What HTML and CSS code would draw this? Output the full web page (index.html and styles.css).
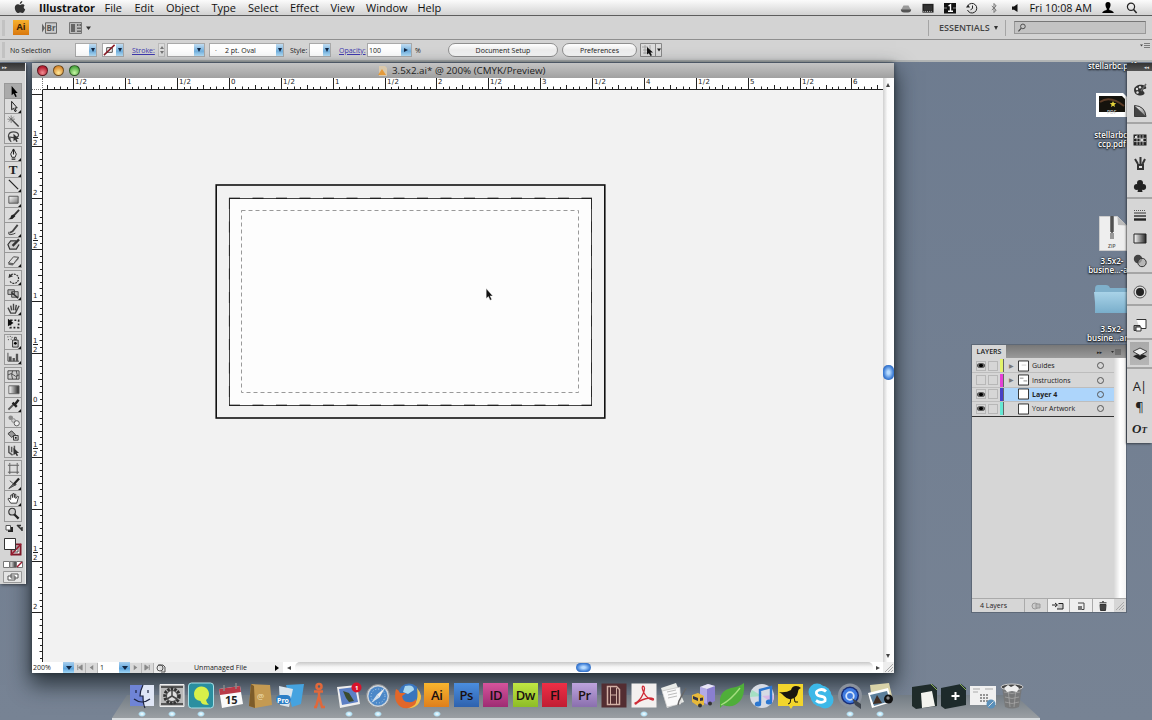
FILE: index.html
```
<!DOCTYPE html>
<html lang="en">
<head>
  <meta charset="UTF-8">
  <title>3.5x2.ai</title>
  <link rel="stylesheet" href="styles.css">
</head>
<body>
  <div class="desktop">

    <!-- Menu bar -->
    <div class="menubar">
      <svg class="apple" viewBox="0 0 12 13"><path d="M8.300 0C8.400 1.600 7.100 2.900 5.800 2.900 5.700 1.400 7 .2 8.300 0ZM10.600 4.400C9.300 5.300 9.400 7.500 11.200 8.400 10.600 10.200 9.500 12 8.400 12 7.600 12 7.300 11.500 6.300 11.500S5 12 4.200 12C2.500 12 .8 8.900.8 6.700.8 4.500 2.200 3.300 3.700 3.300 4.700 3.300 5.400 3.900 6.100 3.900 6.800 3.900 7.600 3.200 8.700 3.200 9.500 3.200 10.200 3.700 10.600 4.400Z"/></svg>
      <div class="menus">
        <b>Illustrator</b><span>File</span><span>Edit</span><span>Object</span><span>Type</span><span>Select</span><span>Effect</span><span>View</span><span>Window</span><span>Help</span>
      </div>
      <div class="status">
        <svg viewBox="0 0 12 12"><path d="M1 8 3.500 3.500h5L11 8Z" fill="#999"/><path d="M.8 7.500h10.400Q11 10.500 8 10.500H4Q1 10.500.8 7.500Z" fill="#555"/></svg>
        <svg viewBox="0 0 13 12"><path d="M.5 1.500h12v9.500H.5Z" fill="#222"/><path d="M2 3h9v5.500H2Z" fill="#333"/><path d="M1.500 9.700h10" stroke="#ddd" stroke-dasharray="1 1"/></svg>
        <svg viewBox="0 0 12 12"><path d="M0 1h12v10.500H0Z" fill="#111"/><path d="M4.500 4 6.500 2.800V9M4 9.300h5" stroke="#fff" stroke-width="1.400" fill="none"/><path d="M0 6h3M9 6h3" stroke="#888"/></svg>
        <svg viewBox="0 0 12 12"><path d="M2 3.500A4.800 4.800 0 1 1 1.500 8M6.500 3.500V6.500L4.500 7.800" stroke="#222" fill="none"/><path d="M0 5.500 4 5.500 2 2.500Z" fill="#222"/></svg>
        <svg viewBox="0 0 12 12"><path d="M3.800 4 8.200 8 6 10.500V1.500L8.200 4 3.800 8" stroke="#777" fill="none"/></svg>
        <svg viewBox="0 0 12 12"><path d="M2 4.500h2L7.500 2v8L4 7.800H2Z" fill="#111"/></svg>
      </div>
      <span class="clock">Fri 10:08 AM</span>
      <svg class="user" viewBox="0 0 12 12"><path d="M6 0C8 0 8.800 1.500 8.500 3.500 8.300 5 7.500 6 7.300 6.500V8Q11.500 8.800 11.800 11H.2Q.5 8.800 4.700 8V6.500C4.500 6 3.700 5 3.500 3.500 3.200 1.500 4 0 6 0Z"/></svg>
      <svg class="find" viewBox="0 0 12 12"><circle cx="5" cy="4.800" r="3.600" stroke="#222" stroke-width="1.200" fill="none"/><path d="M7.600 7.500 10.600 11" stroke="#222" stroke-width="1.500"/></svg>
    </div>

    <!-- Application bar -->
    <div class="appbar">
      <span class="grip"></span>
      <span class="ai-logo">Ai</span>
      <svg class="bridge" viewBox="0 0 15 12"><path d="M0 1.500 3 6 0 10.500Z" fill="#666"/><path d="M3.500.8h11v10.500h-11Z" fill="#ccc" stroke="#666"/><text x="4.500" y="9.200">Br</text></svg>
      <svg class="arrange" viewBox="0 0 22 12"><path d="M.5.500h12v11H.5Z" fill="#bbb" stroke="#777"/><path d="M2 2h4v8H2ZM8 2h1.500v2H8ZM10.500 2H12v2h-1.500ZM8 5.500h4V7H8ZM8 8.500h4V10H8Z" fill="#666"/><path d="M17 4.500h5l-2.500 3.500Z" fill="#333"/></svg>
      <div class="workspace">ESSENTIALS<i class="down"></i></div>
      <div class="search"><svg viewBox="0 0 10 10"><circle cx="6" cy="3.800" r="2.600" stroke="#444" fill="none"/><path d="M4 6 1 9.200" stroke="#444" stroke-width="1.300"/></svg></div>
    </div>

    <!-- Control bar -->
    <div class="control">
      <span class="grip"></span>
      <span class="no-sel">No Selection</span>
      <span class="combo fill-box"><i></i></span>
      <span class="combo stroke-box"><svg viewBox="0 0 14 12"><path d="M4 3.500h6v5H4Z" fill="none" stroke="#444"/><path d="M1 11.500 12.500.500" stroke="#8b1a25" stroke-width="1.600"/></svg><i></i></span>
      <a class="stroke-label">Stroke:</a>
      <span class="stepper"><b></b><b></b></span>
      <span class="combo weight"><i></i></span>
      <span class="combo brush"><em>·</em>2 pt. Oval<i></i></span>
      <span class="style-label">Style:</span>
      <span class="combo style-box"><i></i></span>
      <a class="opacity-label">Opacity:</a>
      <span class="combo opacity">100<i class="side"></i></span>
      <span class="percent">%</span>
      <button class="doc">Document Setup</button>
      <button class="prefs">Preferences</button>
      <svg class="select-like" viewBox="0 0 22 14"><path d="M.5.500h21v13H.5ZM15.500 1v12" fill="#ddd" stroke="#888"/><path d="M2 4h6M3 7h6M3 10h4M5 2v9M10 2v5" stroke="#999" stroke-width=".8"/><path d="M7 4v7.500l1.800-1.300L10.500 13l1.500-.7-1.600-2.800H13Z" fill="#111"/><path d="M17 5.500h4L19 8.500Z" fill="#222"/></svg>
      <svg class="flyout" viewBox="0 0 10 8"><path d="M0 2.500h3L1.500 4.500Z" fill="#444"/><path d="M4 1.500h6M4 3.500h6M4 5.500h6" stroke="#666" stroke-width=".8"/></svg>
    </div>

    <!-- Desktop files -->
    <div class="files">
      <div class="file file-top">stellarbc.pdf</div>
      <div class="file file-pdf">
        <svg viewBox="0 0 32 24"><path d="M0 0h27l5 5v19H0Z" fill="#fff"/><path d="M3 3h23l3 3v13H3Z" fill="#15130d"/><path d="M4 9Q14 2 28 13" stroke="#5b3b26" stroke-width="2" fill="none"/><path d="m17 8 .9 2.100 2.300.2-1.800 1.500.6 2.200-2-1.300-2 1.300.6-2.200-1.800-1.500 2.300-.2Z" fill="#e6d43c"/><text x="11" y="21">PDF</text></svg>
        stellarbc-<br>ccp.pdf
      </div>
      <div class="file file-zip">
        <svg viewBox="0 0 28 35"><path d="M.5.500h18l9 9v25H.500Z" fill="#eee" stroke="#ccc"/><path d="M18.500.500 19 9l9 .5Z" fill="#bbb"/><path d="M13 0v16" stroke="#777" stroke-width="4"/><path d="M13 0v22" stroke="#444" stroke-width="1.500"/><path d="M11 17h4v6h-4Z" fill="#999"/><text x="9" y="32">ZIP</text></svg>
        3.5x2-<br>busine...-are
      </div>
      <div class="file file-folder">
        <svg viewBox="0 0 36 28"><path d="M1 4Q1 0 4 0h8q3 0 4 3h20v25H1Z" fill="#7fb0cb"/><path d="M0 7h36v21H2Z" fill="url(#folder)"/></svg>
        3.5x2-<br>busine...area
      </div>
    </div>

    <!-- Document window -->
    <div class="window">
      <div class="titlebar">
        <span class="light red"></span><span class="light yellow"></span><span class="light green"></span>
        <div class="title"><svg viewBox="0 0 10 10"><path d="M1 0h6l2 2v8H1Z" fill="#d9c8ab"/><path d="M0 9 4 3 8 9Z" fill="#e39a3c"/></svg>3.5x2.ai* @ 200% (CMYK/Preview)</div>
      </div>
      <div class="work">
        <div class="corner"></div>
        <svg class="ruler-x" id="rulerX" viewBox="43 78 840 12"></svg>
        <svg class="ruler-y" id="rulerY" viewBox="32 90 11 572"></svg>
        <svg class="canvas" viewBox="43 90 840 572">
          <rect x="216.200" y="185" width="388.600" height="233" fill="none" stroke="#111" stroke-width="1.600"/>
          <rect x="229.500" y="198.500" width="362" height="207" fill="#fdfdfd" stroke="#444"/>
          <path d="M229 198.200H592M229 405.200H592" stroke="#111" stroke-dasharray="11 12.500"/>
          <path d="M229.400 198V405M591.500 198V405" stroke="#222" stroke-dasharray="11 12.500" stroke-width=".8"/>
          <rect x="241.500" y="210.500" width="337" height="182" fill="none" stroke="#999" stroke-dasharray="4 3"/>
          <path d="M486.200 288.500v10l2.200-1.900 1.700 3.600 1.700-.8-1.700-3.500h2.700Z" fill="#111" stroke="#fff" stroke-width=".4"/>
        </svg>
        <div class="scroll-y"><span class="thumb"></span><span class="arrow up"></span><span class="arrow dn"></span></div>
      </div>
      <div class="statusbar">
        <span class="zoom-value">200%</span><span class="drop"></span>
        <span class="nav"><svg viewBox="0 0 8 8"><path d="M2 1v6M7 1 3 4l4 3Z" stroke="#888" fill="#888"/></svg></span>
        <span class="nav"><svg viewBox="0 0 8 8"><path d="M6 1 2 4l4 3Z" fill="#888"/></svg></span>
        <span class="page">1</span><span class="drop"></span>
        <span class="nav"><svg viewBox="0 0 8 8"><path d="M2 1 6 4 2 7Z" fill="#888"/></svg></span>
        <span class="nav"><svg viewBox="0 0 8 8"><path d="M6 1v6M1 1l4 3-4 3Z" stroke="#888" fill="#888"/></svg></span>
        <svg class="preview" viewBox="0 0 10 10"><path d="M2 2h5l2 2v5H5" fill="#ddd" stroke="#555"/><circle cx="4" cy="5" r="3" fill="none" stroke="#555"/></svg>
        <span class="managed">Unmanaged File</span>
        <i class="right"></i>
        <div class="scroll-x"><span class="arrow lf"></span><div class="track"><span class="thumb"></span></div><span class="arrow rt"></span></div>
        <svg class="resize" viewBox="0 0 11 11"><path d="M2 10 10 2M5 10l5-5M8 10l2-2" stroke="#aaa"/></svg>
      </div>
    </div>

    <!-- Tools -->
    <div class="tools">
      <div class="tools-head">▸▸</div>
      <div class="tool-list">
        <div class="group">
          <div class="tool on"><svg viewBox="0 0 16 14"><path d="M6 1v10l2.200-1.800L10 13l1.500-.7-1.700-3.600H12.500Z"/></svg></div>
          <div class="tool more"><svg viewBox="0 0 16 14"><path d="M6 1.500v9l2-1.500 1.700 3.500 1.300-.6L9.500 8.500H12Z" fill="#ddd" stroke="#111"/></svg></div>
          <div class="tool"><svg viewBox="0 0 16 14"><path d="m6.500 5.500 7 7" stroke="#444" stroke-width="1.500"/><path d="M5.500.5v8M1.500 4.500h8M2.700 1.700l5.600 5.600M8.300 1.700 2.700 7.300" stroke="#555" stroke-width=".7"/></svg></div>
          <div class="tool"><svg viewBox="0 0 16 14"><path d="M5 10C1 8 2 2 8 2S15 7 11 8 3 6 3 9s3 2 2 4" fill="none" stroke="#444" stroke-width="1.300"/><path d="M8 4v8l1.800-1.500L11 13l1.500-.6-1.200-2.600H14Z" fill="#333"/></svg></div>
        </div>
        <div class="group">
          <div class="tool more"><svg viewBox="0 0 16 14"><path d="M8 1 11 6.500 9.700 10H6.300L5 6.500Z" fill="#eee" stroke="#222"/><path d="M8 1v6M6 12h4" stroke="#222" stroke-width="1.300"/></svg></div>
          <div class="tool more"><span class="t">T</span></div>
          <div class="tool more"><svg viewBox="0 0 16 14"><path d="m3 2 10 10" stroke="#222" stroke-width="1.300"/></svg></div>
          <div class="tool more"><svg viewBox="0 0 16 14"><path d="M3 3.500h10v7.500H3Z" fill="url(#shade)" stroke="#555"/></svg></div>
          <div class="tool"><svg viewBox="0 0 16 14"><path d="M14 2 8 8.500" stroke="#333" stroke-width="2"/><path d="M8.500 7Q5 7 5 10 4 11.500 2 12q5 1 8-3.200Z" fill="#222"/></svg></div>
          <div class="tool more"><svg viewBox="0 0 16 14"><path d="M12.500 2 7 9 4 10.500" stroke="#444" stroke-width="2" fill="none"/><path d="M3 9.500Q2 13 5 12.500T10 11" stroke="#333" fill="none"/></svg></div>
          <div class="tool"><svg viewBox="0 0 16 14"><path d="M11 3H5L2 7l2 5h7l3-5" stroke="#333" fill="#ccc" stroke-width="1.300"/><path d="m14 1.500-7 7" stroke="#333" stroke-width="2.500"/></svg></div>
          <div class="tool more"><svg viewBox="0 0 16 14"><path d="M2.500 9.500 8 3l5.500.5L8 10.500Z" fill="#ddd" stroke="#444"/><path d="M2.500 9.500v2L7 12.500l6.500-7v-2L8 10.500Z" fill="#666"/></svg></div>
        </div>
        <div class="group">
          <div class="tool more"><svg viewBox="0 0 16 14"><path d="M5.500 3.200A5 5 0 1 1 4 9.500" fill="none" stroke="#333" stroke-width="1.300" stroke-dasharray="2 1"/><path d="M2.500 6.500 3.500 2l4 2.500Z" fill="#333"/></svg></div>
          <div class="tool more"><svg viewBox="0 0 16 14"><path d="M2 3h7v5H2ZM6 5h7v6H6Z" fill="#bbb" stroke="#444"/><path d="m6 6 7 6" stroke="#333" stroke-width="1.500"/></svg></div>
          <div class="tool more"><svg viewBox="0 0 16 14"><path d="M2 6l3 6h5l4-8M5 4l1 5M8 2v7M11 3l-1 6" fill="none" stroke="#444" stroke-width="1.500"/></svg></div>
          <div class="tool"><svg viewBox="0 0 16 14"><path d="M5 3.500h8.500v8H4.500Z" fill="none" stroke="#222" stroke-width="1.800" stroke-dasharray="2 2"/><path d="M2 2v8l6-3.500Z" fill="#111"/></svg></div>
        </div>
        <div class="group">
          <div class="tool more"><svg viewBox="0 0 16 14"><path d="M7 5.500h6V13H7ZM9 2.500h2V5H9Z" fill="#ccc" stroke="#333"/><path d="M1.500 2h1M4 1.500h1M6 2.500h1M2 5h1M5 4.500h1" stroke="#333"/><circle cx="10" cy="9" r="1.500"/></svg></div>
          <div class="tool more"><svg viewBox="0 0 16 14"><path d="M2 3v9h12" stroke="#444" fill="none"/><path d="M3 7h3v5H3ZM7 8.500h2.500V12H7ZM10.500 4H13v8h-2.500Z" fill="#555"/></svg></div>
        </div>
        <div class="group">
          <div class="tool"><svg viewBox="0 0 16 14"><path d="M2 3h12v9H2ZM2 7.500q4-3 6 0t6 0M7 3q-2 4 0 9M11 3q2 4 0 9" fill="#ccc" stroke="#444"/></svg></div>
          <div class="tool"><svg viewBox="0 0 16 14"><path d="M3 3h11v8.500H3Z" fill="url(#bw)" stroke="#666"/></svg></div>
          <div class="tool more"><svg viewBox="0 0 16 14"><path d="M2.500 12.500 8 7" stroke="#555" stroke-width="2"/><path d="m7 5 4.500 4.500M9.500 7 13.500 2" stroke="#222" stroke-width="2.600"/></svg></div>
          <div class="tool"><svg viewBox="0 0 16 14"><circle cx="5" cy="4" r="2.500" fill="#888"/><circle cx="8" cy="7" r="2" fill="#ccc" stroke="#888"/><circle cx="11.500" cy="10" r="2.800" fill="#eee" stroke="#555"/></svg></div>
          <div class="tool"><svg viewBox="0 0 16 14"><path d="M2 5 6 2l4 4-4 3Z" fill="#999" stroke="#333"/><path d="M8 7h5v5H8Z" fill="#ccc" stroke="#333"/><circle cx="10.500" cy="9.500" r="1" /></svg></div>
          <div class="tool"><svg viewBox="0 0 16 14"><path d="M3 2v7l4 3M6 3v6M9 2v5" stroke="#555" stroke-width="1.600" fill="none"/><path d="M8 4v8l2-1.500 1.500 2.500 1.500-.7-1.500-2.500H14Z" fill="#333"/></svg></div>
        </div>
        <div class="group">
          <div class="tool"><svg viewBox="0 0 16 14"><path d="M4 3.500h8v7.500H4ZM4 1v2M12 1v2M4 11v2M12 11v2M2 3.500h2M12 3.500h2M2 11h2M12 11h2" fill="none" stroke="#555"/></svg></div>
          <div class="tool more"><svg viewBox="0 0 16 14"><path d="M3 12.500 8 7l3 1Z" fill="#777" stroke="#444"/><path d="M8 8 14 1.500" stroke="#222" stroke-width="2.400"/><path d="m4 4 6 5" stroke="#444"/></svg></div>
          <div class="tool more"><svg viewBox="0 0 16 14"><path d="M5 12 2 7.500l1-1L5 8V3.500l1.500-.5L7 6V2l1.500-.5L9 6V2.500l1.500 0V7L12.500 4.500 13.500 5 11.500 12Z" fill="#fff" stroke="#333"/></svg></div>
          <div class="tool"><svg viewBox="0 0 16 14"><circle cx="6.500" cy="5" r="3.600" fill="#ccc" stroke="#333" stroke-width="1.200"/><path d="m9 8 4.500 4.500" stroke="#222" stroke-width="2.400"/></svg></div>
        </div>
      </div>
      <svg class="paint" viewBox="0 0 22 62">
        <path d="M5 3h5v5H5Z" fill="#222"/><path d="M3 1.500h4.500V6H3Z" fill="#fff" stroke="#555"/>
        <path d="m14 1 5 5M15 1.500h3M19 3v4" stroke="#333" stroke-width="1.500"/>
        <path d="M8.500 20.500h9v10h-9Z" fill="#fff" stroke="#7d1a2a" stroke-width="2"/><path d="M11 23h4v5h-4Z" fill="none" stroke="#444"/><path d="m8 31 10-11" stroke="#9c1b30" stroke-width="1.500"/>
        <path d="M1.500 14.500h11v11h-11Z" fill="#fff" stroke="#333"/>
        <path d="M.5 37.500h6v6h-6Z" fill="#fff" stroke="#777"/><path d="M7 37.500h6v6H7Z" fill="url(#bw)" stroke="#777"/><path d="M13.500 37.500h6v6h-6Z" fill="#fff" stroke="#777"/><path d="m14 43 5-5" stroke="#9c1b30" stroke-width="1.500"/>
        <path d="M.5 47.500h18v11h-18Z" fill="#e4e4e4" stroke="#999"/><path d="M5 52h7v4H5ZM8 50h7v4H8Z" fill="#fff" stroke="#555"/>
      </svg>
    </div>

    <!-- Layers -->
    <div class="layers">
      <div class="layers-head">
        <span class="tab">LAYERS</span><span class="ff">▸▸</span>
        <svg viewBox="0 0 10 8"><path d="M0 3h3L1.500 5Z" fill="#333"/><path d="M4 2h6M4 4h6M4 6h6" stroke="#444" stroke-width=".8"/></svg>
      </div>
      <div class="layers-body">
        <div class="rows">
          <div class="row"><span class="box eye"></span><span class="box"></span><span class="color c-yellow"></span><span class="tri">▶</span><svg class="mini" viewBox="0 0 12 12"><path d="M.5.500h11v11H.500Z" fill="#fff" stroke="#222"/><path d="M4 5h5" stroke="#ccc"/></svg><span class="name">Guides</span><span class="target"></span></div>
          <div class="row"><span class="box"></span><span class="box"></span><span class="color c-pink"></span><span class="tri">▶</span><svg class="mini" viewBox="0 0 12 12"><path d="M.5.500h11v11H.500Z" fill="#fff" stroke="#222"/><path d="M2 4h4M6 7h4" stroke="#888"/></svg><span class="name">Instructions</span><span class="target"></span></div>
          <div class="row active"><span class="box eye"></span><span class="box"></span><span class="color c-blue"></span><span class="tri"></span><svg class="mini" viewBox="0 0 12 12"><path d="M.5.500h11v11H.500Z" fill="#fff" stroke="#222"/></svg><span class="name">Layer 4</span><span class="target"></span></div>
          <div class="row"><span class="box eye"></span><span class="box"></span><span class="color c-cyan"></span><span class="tri"></span><svg class="mini" viewBox="0 0 12 12"><path d="M.5.500h11v11H.500Z" fill="#fff" stroke="#222"/></svg><span class="name">Your Artwork</span><span class="target"></span></div>
        </div>
        <div class="layers-scroll"></div>
      </div>
      <div class="layers-foot">
        <span class="count">4 Layers</span>
        <span class="fbtn dim"><svg viewBox="0 0 12 10"><circle cx="5" cy="5" r="3" fill="#ccc" stroke="#999"/><path d="M6 3h4v4H6Z" fill="#bbb" stroke="#999"/></svg></span>
        <span class="fbtn"><svg viewBox="0 0 12 10"><path d="M0 4h5M3 2l2.500 2L3 6" stroke="#222" fill="none"/><path d="M6.500 2.500h4.500v5.500H5" stroke="#222" fill="#ccc"/></svg></span>
        <span class="fbtn"><svg viewBox="0 0 12 10"><path d="M3 2h6v6.500H6" stroke="#444" fill="#eee"/><path d="M3 5h4v4H3Z" fill="#777"/></svg></span>
        <span class="fbtn"><svg viewBox="0 0 12 10"><path d="M3 3.500h6L8.500 9.500h-5ZM2.500 1.800h7M5 .8h2" fill="#444" stroke="#333"/></svg></span>
        <svg class="resize" viewBox="0 0 11 11"><path d="M2 10 10 2M5 10l5-5M8 10l2-2" stroke="#aaa"/></svg>
      </div>
    </div>

    <!-- Collapsed panels -->
    <div class="panels">
      <div class="panels-head">◂◂</div>
      <div class="pgroup two">
        <svg viewBox="0 0 16 16"><path d="M2 8C2 4 7 2 11 3s4 4 2 4-3 1-1 3-2 4-5 3.500S2 11 2 8Z" fill="#333"/><circle cx="5" cy="7" r="1.200" fill="#ddd"/><circle cx="8" cy="5.200" r="1.200" fill="#ddd"/><circle cx="5.500" cy="10.500" r="1.200" fill="#ddd"/><path d="m9 9 5-7" stroke="#666" stroke-width="1.500"/></svg>
        <svg viewBox="0 0 16 16"><path d="M2.500 2.500Q13 3 14 13.500H2.500Z" fill="url(#shade)" stroke="#333"/><path d="M2.500 13.500V2.500L14 13.500Z" fill="#444"/></svg>
      </div>
      <div class="pgroup three">
        <svg viewBox="0 0 16 16"><path d="M1.500 2.500h13v11h-13Z" fill="#222"/><path d="M2 6.300h12M2 9.600h12M5 3v10M8 3v10M11 3v10" stroke="#ccc" stroke-width=".8"/><path d="M3 4h2v2H3ZM8.500 7H11v2H8.500Z" fill="#ddd"/></svg>
        <svg viewBox="0 0 16 16"><path d="M5 9h7v6H5Z" fill="#333"/><path d="M7 11h3v2H7Z" fill="#ddd"/><path d="M6 9 3 4M8.500 9V2M10.500 9 13 4" stroke="#333" stroke-width="2"/></svg>
        <svg viewBox="0 0 16 16"><circle cx="8" cy="5" r="3" fill="#222"/><circle cx="4.800" cy="9" r="2.900" fill="#222"/><circle cx="11.200" cy="9" r="2.900" fill="#222"/><path d="M7 7h2l1.500 7h-5Z" fill="#222"/></svg>
      </div>
      <div class="pgroup three">
        <svg viewBox="0 0 16 16"><path d="M2 3.500h12" stroke="#555" stroke-dasharray="1 1"/><path d="M2 6h12" stroke="#333"/><path d="M2 9h12" stroke="#333" stroke-width="1.500"/><path d="M2 12.500h12" stroke="#222" stroke-width="2.400"/></svg>
        <svg viewBox="0 0 16 16"><path d="M2 4h12v9H2Z" fill="url(#bw)" stroke="#222"/></svg>
        <svg viewBox="0 0 16 16"><circle cx="6" cy="6" r="4.200" fill="#444"/><circle cx="10" cy="9.500" r="4.200" fill="#aaa" fill-opacity=".7" stroke="#333"/></svg>
      </div>
      <div class="pgroup one">
        <svg viewBox="0 0 16 16"><circle cx="8" cy="8" r="6" fill="#ddd" stroke="#555"/><circle cx="8" cy="8" r="4" fill="#222"/></svg>
      </div>
      <div class="pgroup one last-one">
        <svg viewBox="0 0 16 16"><path d="M4.500 2.500H14v9H8" fill="#fff" stroke="#333"/><path d="M2 8.500h6v5H2Z" fill="#888" stroke="#333"/><path d="M4 10h5v4H4Z" fill="#fff" stroke="#333"/></svg>
      </div>
      <div class="pgroup one pressed">
        <svg viewBox="0 0 16 16"><path d="m8 7 7 3.200L8 14l-7-3.800Z" fill="#222"/><path d="M8 2 15 5.500 8 9.500 1 5.500Z" fill="#eee" stroke="#444"/></svg>
      </div>
      <div class="pgroup type-group"><span class="char">A|</span><span>¶</span><span class="ot">O<small>T</small></span></div>
    </div>

    <!-- Dock -->
    <div class="dock">
      <svg class="shelf" viewBox="0 0 930 25" preserveAspectRatio="none"><path d="M15 0H903L928 23H0Z" fill="url(#shelf)"/><path d="M0 23h928v2H0Z" fill="#d9dde0"/></svg>
      <div class="apps">
        <svg viewBox="0 0 26 26"><path d="M1 2h24v21H1Z" fill="#dfe6f6"/><path d="M1 2h13q-3 6-3 11h3l.5 10H1Z" fill="#6f84d6"/><path d="M7 7v3M19 7v3M5 16q8 6 16 0M14 2q-3 6-3 11h3q0 8 2 12" stroke="#1d2440" fill="none" stroke-width="1.200"/></svg>
        <svg viewBox="0 0 26 26"><path d="M1 1.500h24v22H1Z" fill="#b9b9b9" stroke="#eee"/><path d="M2 4h22M2 21h22" stroke="#555" stroke-width="2"/><circle cx="13" cy="13" r="7" fill="none" stroke="#333" stroke-width="3.500" stroke-dasharray="2.500 1"/><circle cx="13" cy="13" r="5.500" fill="#ddd" stroke="#444"/><path d="M13 13V7.500M13 13l5 3M13 13l-5 3" stroke="#444" stroke-width="1.500"/></svg>
        <svg viewBox="0 0 26 26"><rect x=".5" y="0" width="25" height="25" rx="3" fill="#2a8fa0" stroke="#a8dfe6"/><path d="M6 11a7.500 7.500 0 1 1 12 6 7 7 0 0 0 3 4.500Q14 23 12.500 18 6 17 6 11Z" fill="#d8f04a"/></svg>
        <svg viewBox="0 0 26 26"><path d="m1 6 21-3 3 18-21 4Z" fill="#fafafa"/><path d="m1 6 21-3 1 6-21 3Z" fill="#b93a48"/><path d="M6 2v6M18 0v6" stroke="#888" stroke-width="1.500"/><text x="7" y="21" class="cal">15</text></svg>
        <svg viewBox="0 0 26 26"><path d="m4 1 19 1 2 20-17 3-6-2Z" fill="#c49a52"/><path d="m4 1 3 2 1 22-6-2Z" fill="#7d5c2a"/><text x="10" y="16" class="at">@</text></svg>
        <svg viewBox="0 0 26 26"><path d="m9 2 18-1-3 20-9 3Z" fill="#45a3e0"/><path d="m2 3 14 3-4 18L3 22Z" fill="#d9e4ec"/><rect x="-1" y="12" width="15" height="9" rx="4.500" fill="#2b7fc7"/><text x="0" y="19.500" class="pro">Pro</text></svg>
        <svg viewBox="0 0 26 26"><g fill="none" stroke="#e0683b" stroke-width="2.500"><circle cx="13" cy="3.500" r="2.500"/><path d="M8 8.500h9M13 8v6M13 13l-3 11M13 13l3 11M8 24h3M15 24h4" /></g></svg>
        <svg viewBox="0 0 26 26"><path d="m1 4 20-2 3 19-20 4Z" fill="#eee"/><path d="m3 6 16-2 3 15-16 3Z" fill="#5c7fc4"/><path d="m7 8 6 2 5 8-5 1-3-4Z" fill="#3a4a2e"/><circle cx="20.500" cy="4.500" r="5" fill="#d8142c"/><text x="19" y="7" class="badge">1</text></svg>
        <svg viewBox="0 0 26 26"><circle cx="13" cy="13" r="11.500" fill="#ccd3da" stroke="#888"/><circle cx="13" cy="13" r="9.500" fill="#4c88c8"/><path d="M20 5 14.500 14.500 12 11.500Z" fill="#eee"/><path d="m6 20 6-8.500 2.500 3Z" fill="#d2e0ee"/><circle cx="13" cy="13" r="7" stroke="#b8d2ea" stroke-dasharray="1 2" fill="none"/></svg>
        <svg viewBox="0 0 26 26"><circle cx="14" cy="11" r="10.500" fill="#3975bd"/><path d="M10 3q9-2 9 4l-6 4-5-2Z" fill="#a9d7ee"/><path d="M22 5q7 8 2 15-4 6-12 5 9-3 10-9 1-4 0-11Z" fill="#f2c14a"/><path d="M1 6q3 1 4 4l6 0q-2 2-4 3 1 6 6 6 5 1 8-3 1 5-3 7-6 4-12 1Q0 20 0 13 0 9 1 6Z" fill="#e1672a"/></svg>
        <span class="adobe ai">Ai</span>
        <span class="adobe ps">Ps</span>
        <span class="adobe id">ID</span>
        <span class="adobe dw">Dw</span>
        <span class="adobe fl">Fl</span>
        <span class="adobe pr">Pr</span>
        <svg viewBox="0 0 26 26"><path d="M.5.500h25v24H.500Z" fill="#532d31"/><path d="M6.500 3.500h9l3 3v15h-12Z" fill="none" stroke="#d2b0a5" stroke-width="1.500"/><path d="M9 12h7M9.500 4v17M15.500 5v16" stroke="#d2b0a5"/></svg>
        <svg viewBox="0 0 26 26"><path d="M.5.500h25v24H.500Z" fill="#f3f0ef"/><path d="M4 20q5-2 8-9t0-8q-2 1 1 7t9 7q2-2-4-2-7 1-12 5-2 2-2 0Z" fill="none" stroke="#cf2a35" stroke-width="1.300"/></svg>
        <svg viewBox="0 0 26 26"><path d="m1 5 15-5 8 19-17 6Z" fill="#e9ebe8"/><path d="m2 8 18-4 1 17-14 3Z" fill="#fafafa" stroke="#aaa" stroke-width=".5"/><path d="m7 9 9-2M8 12l9-2M8 15l9-2" stroke="#bbb"/><path d="m26 5-7 13-1 4" stroke="#666" stroke-width="1.500" fill="none"/></svg>
        <svg viewBox="0 0 26 26"><path d="m10 4 8-3 7 2v15l-8 4-7-4Z" fill="#8a7fd0"/><path d="m10 4 7 2v15l-7-3Z" fill="#b3abe6"/><path d="m10 4 8-3 7 2-8 3Z" fill="#e8e6f5"/><path d="m2 12 6-2 6 3v9l-6 1-6-4Z" fill="#e7b93a"/><path d="m3 13 5 2v3l-5-2ZM10 15l3-.5v3L10 18Z" fill="#334"/><circle cx="10" cy="22.500" r="2" fill="#333"/><circle cx="20" cy="20.500" r="2" fill="#333"/></svg>
        <svg viewBox="0 0 26 26"><path d="M1 20Q0 8 12 5 20 4 25 0q1 12-4 18-7 8-17 4L1 25Z" fill="#4fae3a"/><path d="M2 22Q12 17 21 5" stroke="#a5de80" fill="none" stroke-width="1.300"/></svg>
        <svg viewBox="0 0 26 26"><circle cx="13" cy="13" r="12" fill="#d6dbe4"/><path d="M13 13 3 7a12 12 0 0 0-2 7Z" fill="#a5e0c3"/><path d="m13 13 10 7a12 12 0 0 0 2-8Z" fill="#d9b9e6"/><path d="M11 20V7l11-3v14" fill="none" stroke="#2c77d0" stroke-width="2.400"/><ellipse cx="9" cy="21" rx="3.200" ry="2.500" fill="#2c77d0"/><ellipse cx="20" cy="19" rx="3.200" ry="2.500" fill="#2c77d0"/></svg>
        <svg viewBox="0 0 26 26"><path d="M0 1h25v22H15l-2 3-2-3H0Z" fill="#f2d52c"/><path d="M1 9q7 1 12-2 1-4 5-4 3 0 5 2-3 1-3 4-1 6-7 7-3 1-7-3l-2-2Z" fill="#18150f"/><path d="m13 15-1 5-2 1M16 14l1 5h3" stroke="#18150f" fill="none"/></svg>
        <svg viewBox="0 0 26 26"><circle cx="9" cy="9" r="8.500" fill="#3db8e8"/><circle cx="17" cy="17" r="8.500" fill="#3db8e8"/><circle cx="13" cy="13" r="10.500" fill="#3db8e8"/><path d="M18 8.500Q15 5.500 11 7T9 11.500q1 1.500 5 2t3 4.500q-4 3-9-.5" stroke="#fff" stroke-width="2.800" fill="none"/></svg>
        <svg viewBox="0 0 26 26"><circle cx="13" cy="12.500" r="12" fill="#8b929c"/><circle cx="13" cy="12.500" r="9" fill="#182e78"/><circle cx="13" cy="12.500" r="7.500" fill="#3f7be0"/><circle cx="13" cy="13" r="3.800" fill="none" stroke="#d5e5fb" stroke-width="1.800"/><path d="m15 15 9 6v5l-6-4Z" fill="#3f454e"/></svg>
        <svg viewBox="0 0 26 26"><path d="M3 2 22 0l3 13-20 5Z" fill="#d8d2a8"/><path d="m1 10 20-5 4 14-20 6Z" fill="#fff"/><path d="m3 12 17-4 3 10-16 5Z" fill="#5c7f9b"/><path d="m6 21 4-9 5 8Z" fill="#412d23"/><circle cx="21.500" cy="16" r="4.500" fill="#111"/><circle cx="21" cy="15" r="1.700" fill="#888"/></svg>
        <span class="gap"></span>
        <svg viewBox="0 0 26 26"><path d="m1 4 20-3 5 4v18L5 26 1 23Z" fill="#1f2b2a"/><path d="m20 1 6 6" stroke="#8ab05a"/><path d="m10 10 11-2 3 15-13 2Z" fill="#f3f3ee"/></svg>
        <svg viewBox="0 0 26 26"><path d="m1 5 20-4 5 4v17L5 26 1 23Z" fill="#1d2a2b"/><path d="m20 1 6 6" stroke="#8ab05a"/><path d="M15.500 9v8M11.500 13h8" stroke="#fff" stroke-width="2"/></svg>
        <svg viewBox="0 0 26 26"><path d="M0 3h26v19H0Z" fill="#f0f0f0"/><path d="M3 6h7M15 6h8M3 9h5" stroke="#aaa"/><path d="M10 12h9M10 15h9M10 18h9" stroke="#777" stroke-dasharray="2 1" stroke-width="1.500"/><circle cx="21" cy="21" r="4.500" fill="#5a90ba"/><path d="m18.500 23.500 5-5" stroke="#ddd"/></svg>
        <svg viewBox="0 0 26 26"><path d="m3 4 3 20q7 3 14 0l3-20Z" fill="#777" fill-opacity=".9"/><path d="M5 9q8 3 16 0M6 14q7 3 14 0M6 19q7 3 14 0M9 6l2 18M17 6l-2 18" stroke="#aaa" fill="none" stroke-width=".7"/><ellipse cx="13" cy="4" rx="11" ry="3" fill="#444" stroke="#ccc"/><path d="m5 5 4-3 3 2 4-2 4 3-2 4-5-1-5 1Z" fill="#eee"/></svg>
      </div>
      <div class="lamps" id="lamps"></div>
    </div>
  </div>

  <!-- Shared gradients -->
  <svg class="defs" width="0" height="0">
    <defs>
      <linearGradient id="shade" x2="1" y2="1"><stop stop-color="#fff"/><stop offset="1" stop-color="#777"/></linearGradient>
      <linearGradient id="bw"><stop stop-color="#fff"/><stop offset="1" stop-color="#222"/></linearGradient>
      <linearGradient id="folder" x2="0" y2="1"><stop stop-color="#a9d3e8"/><stop offset="1" stop-color="#79aecb"/></linearGradient>
      <linearGradient id="shelf" x2="0" y2="1"><stop stop-color="#737c84"/><stop offset="1" stop-color="#9a9fa3"/></linearGradient>
    </defs>
  </svg>
  <script src="script.js"></script>
</body>
</html>
```

FILE: styles.css
```
body {
  margin: 0;
  overflow: hidden;
  font-family: 'Open Sans', 'Noto Sans', sans-serif;
  color: #222;
}

svg {
  display: block;
  flex: none;
}

.desktop {
  position: relative;
  width: 1152px;
  height: 720px;
  overflow: hidden;
  background: linear-gradient(#6d7b8f, #778394);
}

.defs {
  position: absolute;
}

/* Menu bar */
.menubar {
  display: flex;
  align-items: center;
  height: 15px;
  background: linear-gradient(#fbfbfb, #d2d2d2);
  border-bottom: 1px solid #5d5d5d;
  font-size: 11px;
  line-height: 15px;
  color: #111;
}

.apple {
  width: 12px;
  height: 13px;
  margin-left: 14px;
  fill: #333;
}

.menus {
  display: grid;
  grid-template-columns: 65.5px 30px 31.5px 45.5px 36.5px 42px 40.5px 35.5px 51.5px 41px;
  margin-left: 13px;
  white-space: nowrap;
}

.status {
  display: flex;
  gap: 10px;
  margin-left: 441px;
}

.status svg {
  width: 12px;
  height: 12px;
}

.clock {
  width: 67px;
  margin-left: 8px;
  font-size: 10.8px;
  white-space: nowrap;
}

.user {
  width: 12px;
  height: 12px;
  margin-left: 5px;
}

.find {
  width: 12px;
  height: 12px;
  margin-left: 12px;
}

/* Application bar */
.appbar {
  display: flex;
  align-items: center;
  height: 23px;
  background: #d3d3d3;
  border-bottom: 1px solid #8f8f8f;
}

.grip {
  width: 3px;
  height: 16px;
  margin-left: 2px;
  background: #c2c2c2;
}

.ai-logo {
  width: 16px;
  height: 15px;
  margin-left: 8px;
  background: linear-gradient(#f7b02d, #d9780f);
  font-size: 9px;
  font-weight: bold;
  line-height: 14px;
  text-align: center;
  color: #3b2106;
}

.bridge {
  width: 15px;
  height: 12px;
  margin-left: 13px;
}

.bridge text {
  font-size: 8px;
  font-weight: bold;
  fill: #555;
}

.arrange {
  width: 22px;
  height: 12px;
  margin-left: 12px;
}

.workspace {
  display: flex;
  align-items: center;
  width: 78px;
  height: 16px;
  margin-left: 837px;
  padding-left: 10px;
  box-sizing: border-box;
  border-left: 1px solid #a5a5a5;
  border-right: 1px solid #a5a5a5;
  font-size: 9px;
  font-weight: 600;
  color: #444;
}

.down {
  margin-left: 4px;
  border: 2.5px solid transparent;
  border-top: 4px solid #333;
  border-bottom: 0;
}

.search {
  width: 126px;
  height: 10px;
  margin-left: 8px;
  padding: 1px 2px 0;
  background: #c3c3c3;
  border: 1px solid #999;
  border-top-color: #777;
}

.search svg {
  width: 10px;
  height: 9px;
}

/* Control bar */
.control {
  display: flex;
  align-items: center;
  height: 20px;
  background: #d4d4d4;
  border-bottom: 2px solid #b2b5b5;
  font-size: 7px;
  white-space: nowrap;
}

.control a {
  color: #4039b0;
  text-decoration: underline;
}

.no-sel {
  width: 58px;
  margin-left: 5px;
}

.combo {
  display: flex;
  align-items: center;
  height: 12px;
  background: #fff;
  border: 1px solid #aaa;
}

.combo i {
  display: flex;
  align-items: center;
  justify-content: center;
  width: 7px;
  height: 12px;
  margin-left: auto;
  background: linear-gradient(#c2ddf2, #72b1e0 60%, #b6e2fb);
}

.combo i::after {
  content: "";
  border: 2px solid transparent;
  border-top: 4px solid #122744;
  border-bottom: 0;
}

.combo i.side::after {
  border: 2px solid transparent;
  border-left: 4px solid #122744;
  border-right: 0;
}

.fill-box {
  width: 20px;
  margin-left: 7px;
}

.stroke-box {
  width: 20px;
  margin-left: 5px;
}

.stroke-box svg {
  width: 13px;
  height: 12px;
}

.stroke-label {
  width: 22px;
  margin-left: 8px;
}

.stepper {
  display: flex;
  flex-direction: column;
  align-items: center;
  gap: 2px;
  width: 7px;
  margin-left: 4px;
  padding: 2px 0;
  background: #ddd;
  border: 1px solid #bbb;
  box-sizing: border-box;
}

.stepper b {
  border: 2px solid transparent;
  border-bottom: 3px solid #777;
  border-top: 0;
}

.stepper b + b {
  border-top: 3px solid #777;
  border-bottom: 0;
}

.weight {
  width: 36px;
  margin-left: 2px;
}

.weight i {
  width: 10px;
}

.brush {
  width: 73px;
  margin-left: 4px;
}

.brush em {
  width: 10px;
  margin-left: 5px;
  font-style: normal;
}

.style-label {
  width: 17px;
  margin-left: 6px;
}

.style-box {
  width: 20px;
  margin-left: 2px;
}

.opacity-label {
  width: 26px;
  margin-left: 8px;
}

.opacity {
  width: 43px;
  margin-left: 2px;
  text-indent: 1px;
}

.opacity i {
  width: 10px;
}

.percent {
  width: 8px;
  margin-left: 3px;
}

.control button {
  height: 14px;
  padding: 0;
  background: linear-gradient(#fff, #eee 50%, #fafafa);
  border: 1.5px solid #909090;
  border-radius: 8px;
  font: 7px/9px 'Open Sans', sans-serif;
  color: #222;
}

.control .doc {
  width: 110px;
  margin-left: 25px;
}

.control .prefs {
  width: 75px;
  margin-left: 4px;
}

.select-like {
  width: 22px;
  height: 14px;
  margin-left: 3px;
}

.flyout {
  width: 10px;
  height: 8px;
  margin: 0 2px 8px auto;
}

/* Desktop files */
.file {
  position: absolute;
  left: 1081px;
  display: flex;
  flex-direction: column;
  align-items: center;
  width: 62px;
  font-size: 8px;
  font-weight: 600;
  line-height: 8.5px;
  text-align: center;
  color: #fff;
  text-shadow: 0 1px 2px #000, 0 0 2px #000;
  white-space: nowrap;
}

.file text {
  font-size: 5px;
  fill: #ccc;
  text-shadow: none;
}

.file-zip text {
  fill: #555;
}

.file-top {
  top: 62px;
}

.file-pdf {
  top: 93px;
}

.file-pdf svg {
  width: 32px;
  height: 24px;
  margin: 0 0 14px;
}

.file-zip {
  top: 216px;
}

.file-zip svg {
  width: 28px;
  height: 35px;
  margin: 0 0 6px 2px;
}

.file-folder {
  top: 285px;
}

.file-folder svg {
  width: 36px;
  height: 28px;
  margin-bottom: 12px;
}

/* Document window */
.window {
  position: absolute;
  left: 32px;
  top: 63px;
  display: flex;
  flex-direction: column;
  width: 862px;
  height: 610px;
  background: #f2f2f2;
  box-shadow: 0 10px 20px 2px rgba(20, 30, 35, 0.75), 0 0 5px rgba(20, 30, 30, 0.6);
}

.titlebar {
  display: flex;
  align-items: center;
  gap: 5px;
  height: 15px;
  padding-left: 5px;
  background: linear-gradient(#c4c4c4, #a0a0a0);
}

.light {
  width: 9px;
  height: 9px;
  border: 0.5px solid rgba(0, 0, 0, 0.5);
  border-radius: 50%;
}

.red {
  background: radial-gradient(circle at 50% 75%, #f28d93, #b51f30 70%);
}

.yellow {
  background: radial-gradient(circle at 50% 75%, #ffe99a, #d98a2e 75%);
}

.green {
  background: radial-gradient(circle at 50% 75%, #c5f5a2, #4ba63f 75%);
}

.title {
  display: flex;
  align-items: center;
  gap: 4px;
  margin-left: 293px;
  font-size: 9.8px;
  line-height: 14px;
  color: #222;
  white-space: nowrap;
}

.title svg {
  width: 10px;
  height: 10px;
}

.work {
  display: grid;
  grid-template-columns: 11px 840px 11px;
  grid-template-rows: 12px 572px;
}

.corner {
  background: #fff;
  border-right: 1px dotted #777;
  border-bottom: 1px dotted #777;
}

.ruler-x,
.ruler-y {
  background: #fff;
}

.ruler-x,
.ruler-y,
.canvas {
  width: 100%;
  height: 100%;
}

.ruler-x text,
.ruler-y text {
  font-family: 'DejaVu Sans', sans-serif;
  font-size: 7px;
  fill: #222;
}

.ruler-x text {
  letter-spacing: 0.4px;
}

.canvas {
  grid-column: 2;
  grid-row: 2;
  background: #f2f2f2;
}

.ruler-y {
  grid-column: 1;
  grid-row: 2;
}

.scroll-y {
  position: relative;
  grid-column: 3;
  grid-row: 1 / 3;
  background: linear-gradient(90deg, #d0d0d0, #fafafa 40%, #fff);
}

.scroll-y .thumb {
  position: absolute;
  left: 0;
  top: 287px;
  width: 11px;
  height: 15px;
}

.thumb {
  background: radial-gradient(#b7dbff 15%, #4181d8 60%, #22509b);
  border-radius: 5px;
}

.arrow {
  border: 2.5px solid transparent;
}

.up {
  position: absolute;
  left: 3px;
  top: 5px;
  border-bottom: 4px solid #444;
  border-top: 0;
}

.dn {
  position: absolute;
  left: 3px;
  bottom: 4px;
  border-top: 4px solid #444;
  border-bottom: 0;
}

.statusbar {
  display: flex;
  align-items: center;
  height: 11px;
  background: #ededed;
  font-size: 7px;
  white-space: nowrap;
}

.zoom-value {
  width: 31px;
  padding-left: 1px;
  box-sizing: border-box;
  background: #fff;
  line-height: 11px;
}

.drop {
  display: flex;
  align-items: center;
  justify-content: center;
  width: 11px;
  height: 11px;
  background: linear-gradient(#a9cfee, #5ea5dd 60%, #a4d9f7);
}

.drop::after {
  content: "";
  border: 3px solid transparent;
  border-top: 4px solid #122744;
  border-bottom: 0;
}

.nav {
  display: flex;
  align-items: center;
  justify-content: center;
  width: 12px;
  height: 10px;
  background: #dadada;
  border-right: 1px solid #b5b5b5;
  box-sizing: border-box;
}

.nav svg {
  width: 7px;
  height: 7px;
}

.page {
  width: 21px;
  padding-left: 2px;
  box-sizing: border-box;
  background: #fff;
  line-height: 11px;
}

.preview {
  width: 10px;
  height: 10px;
  margin-left: 2px;
}

.managed {
  width: 56px;
  margin-left: 28px;
}

.right {
  margin-left: 25px;
  border: 3px solid transparent;
  border-left: 4px solid #000;
  border-right: 0;
}

.scroll-x {
  display: flex;
  align-items: center;
  flex: 1;
  height: 11px;
  margin-left: 4px;
  background: #fff;
}

.lf {
  margin: 0 4px;
  border-right: 4px solid #444;
  border-left: 0;
}

.rt {
  margin: 0 3px;
  border-left: 4px solid #444;
  border-right: 0;
}

.track {
  flex: 1;
  height: 11px;
  background: linear-gradient(#c9c9c9, #f6f6f6 45%, #fff);
  border-radius: 5px;
}

.track .thumb {
  display: block;
  width: 15px;
  height: 9px;
  margin: 1px 0 0 281px;
}

.resize {
  width: 11px;
  height: 11px;
}

/* Tools */
.tools {
  position: absolute;
  left: 0;
  top: 63px;
  width: 25px;
  height: 521px;
  background: #d5d5d5;
  border-right: 1px solid #eee;
  box-shadow: 1px 1px 3px rgba(0, 0, 0, 0.5);
}

.tools-head,
.panels-head {
  height: 8px;
  background: linear-gradient(#333, #555);
  font: 5px/8px 'DejaVu Sans', sans-serif;
  color: #ddd;
}

.tools-head {
  padding-left: 2px;
}

.tool-list {
  display: flex;
  flex-direction: column;
  gap: 2px;
  width: 18px;
  margin: 12px 0 0 4px;
}

.group {
  border: 1px solid #999;
  border-bottom: 0;
}

.tool {
  position: relative;
  display: flex;
  align-items: center;
  justify-content: center;
  height: 14.1px;
  background: #dcdcdc;
  border-bottom: 1px solid #999;
}

.tool.on {
  background: #aaa;
}

.tool svg {
  width: 15px;
  height: 13px;
}

.tool.more::after {
  content: "";
  position: absolute;
  right: 0;
  bottom: 0;
  border-left: 3px solid transparent;
  border-bottom: 3px solid #111;
}

.t {
  font: bold 13px/14px 'Liberation Serif', serif;
}

.paint {
  width: 22px;
  height: 62px;
  margin: 2px 0 0 3px;
}

/* Layers */
.layers {
  position: absolute;
  left: 972px;
  top: 345px;
  width: 154px;
  height: 267px;
  background: #d6d6d6;
  outline: 1px solid #5d6877;
}

.layers-head {
  display: flex;
  align-items: center;
  height: 13px;
  background: linear-gradient(#777, #9a9a9a);
}

.layers-head svg {
  width: 10px;
  height: 8px;
  margin-left: 9px;
}

.tab {
  width: 34px;
  height: 13px;
  background: #d6d6d6;
  font-size: 7px;
  font-weight: 600;
  line-height: 13px;
  text-align: center;
}

.ff {
  margin-left: 91px;
  font: 5px/8px 'DejaVu Sans', sans-serif;
}

.layers-body {
  display: flex;
  height: 240px;
}

.rows {
  width: 142px;
  padding-top: 1px;
}

.row {
  display: grid;
  grid-template-columns: 12px 12px 6px 12px 12px 64px 10px;
  align-items: center;
  height: 14.4px;
  padding-left: 4px;
  font-size: 7px;
  box-sizing: border-box;
  border-bottom: 1px solid #bdbdbd;
}

.row:last-child {
  border-bottom: 1.5px solid #333;
}

.row.active {
  background: linear-gradient(90deg, #d6d6d6 31px, #add5fb 31px);
  font-weight: bold;
}

.box {
  position: relative;
  width: 10px;
  height: 10px;
  border: 1px solid #b7b7b7;
  box-sizing: border-box;
}

.eye::after {
  content: "";
  position: absolute;
  left: 0;
  top: 1.5px;
  width: 8px;
  height: 5px;
  background: radial-gradient(#000 35%, #777 45%, #333 70%);
  border-radius: 50%;
}

.color {
  width: 3px;
  height: 13px;
  border-right: 1px solid #666;
}

.c-yellow {
  background: #e4f46a;
}

.c-pink {
  background: #e63fd6;
}

.c-blue {
  background: #463fc6;
}

.c-cyan {
  background: #64e8d4;
}

.tri {
  padding-left: 3px;
  font: 6px/8px 'DejaVu Sans', sans-serif;
  color: #777;
}

.mini {
  width: 11px;
  height: 12px;
}

.target {
  width: 5px;
  height: 5px;
  margin-left: 3px;
  border: 1px solid #555;
  border-radius: 50%;
}

.name {
  padding-left: 2px;
  white-space: nowrap;
}

.layers-scroll {
  flex: 1;
  background: linear-gradient(90deg, #d8d8d8, #fff 50%, #f4f4f4);
}

.layers-foot {
  display: flex;
  align-items: center;
  height: 13px;
  border-top: 1px solid #aaa;
  font-size: 7px;
}

.count {
  width: 44px;
  padding-left: 8px;
}

.fbtn {
  display: flex;
  align-items: center;
  justify-content: center;
  width: 22.5px;
  height: 13px;
  background: #eee;
  border-left: 1px solid #aaa;
  box-sizing: border-box;
}

.fbtn.dim {
  background: #d6d6d6;
}

.fbtn svg {
  width: 12px;
  height: 10px;
}

/* Collapsed panels */
.panels {
  position: absolute;
  left: 1127px;
  top: 63px;
  width: 25px;
  height: 380px;
  background: #d6d6d6;
  box-shadow: -1px 1px 2px rgba(0, 0, 0, 0.5);
}

.panels-head {
  padding-right: 3px;
  text-align: right;
}

.pgroup {
  display: flex;
  flex-direction: column;
  align-items: center;
  justify-content: space-around;
  padding: 4px 0 0;
  box-sizing: border-box;
  border-bottom: 2px solid #a5a5a5;
}

.pgroup svg {
  width: 16px;
  height: 16px;
}

.two {
  height: 53px;
  padding-top: 8px;
}

.three {
  height: 75px;
}

.one {
  height: 32px;
  padding-top: 6px;
}

.last-one {
  height: 34px;
  padding-top: 5px;
}

.pressed {
  height: 29px;
  padding: 2px 3px;
  background: linear-gradient(#aaa, #b6b6b6) content-box;
}

.type-group {
  height: 72px;
  padding-top: 6px;
  border: 0;
  font-size: 13px;
  line-height: 20px;
}

.char {
  letter-spacing: -1px;
}

.ot {
  font-family: 'Liberation Serif', serif;
  font-style: italic;
  font-weight: bold;
}

.ot small {
  font-size: 9px;
}

/* Dock */
.dock {
  position: absolute;
  left: 112px;
  top: 683px;
  width: 930px;
  height: 37px;
}

.shelf {
  position: absolute;
  left: 0;
  top: 12px;
  width: 930px;
  height: 25px;
}

.apps {
  position: relative;
  display: grid;
  grid-template-columns: repeat(26, 29.52px) 14.5px repeat(4, 29.5px);
  margin-left: 16px;
}

.apps svg {
  width: 26px;
  height: 26px;
  margin-left: 1px;
  overflow: visible;
}

.adobe {
  width: 25px;
  height: 24px;
  margin-left: 1px;
  font-size: 13px;
  font-weight: 600;
  line-height: 24px;
  text-align: center;
  letter-spacing: -0.5px;
  color: #1a1010;
}

.ai {
  background: linear-gradient(#f8b52e, #df7f1c);
}

.ps {
  background: linear-gradient(#4b8ee0, #2e62ae);
}

.id {
  background: linear-gradient(#d5549c, #9e2c73);
}

.dw {
  background: linear-gradient(#c1e743, #8dbd26);
}

.fl {
  background: linear-gradient(#ee2f46, #c01d33);
}

.pr {
  background: linear-gradient(#bea4dd, #8a6fae);
}

.cal {
  font-size: 11px;
  font-weight: bold;
  fill: #222;
}

.at {
  font-size: 8px;
  fill: #efe0b5;
}

.pro {
  font-size: 7px;
  font-weight: bold;
  fill: #fff;
}

.badge {
  font-size: 6px;
  font-weight: bold;
  fill: #fff;
}

.lamps span {
  position: absolute;
  top: 28px;
  width: 8px;
  height: 6px;
  background: radial-gradient(#fff, #b5e2f5 45%, transparent 70%);
}
```

FILE: script.js
```
const NS = 'http://www.w3.org/2000/svg';
const HALF = 51.87; // half an inch at 200%
const STEP = HALF / 8;

function add(parent, tag, attrs, text) {
  const el = document.createElementNS(NS, tag);
  for (const key in attrs) el.setAttribute(key, attrs[key]);
  if (text) el.textContent = text;
  parent.appendChild(el);
}

function tickLength(i) {
  if (i % 8 === 0) return 12;
  if (i % 4 === 0) return 5;
  if (i % 2 === 0) return 3.5;
  return 3;
}

const rulerX = document.getElementById('rulerX');
let ticks = 'M43 89.5H883';
for (let i = -28; i <= 100; i++) {
  const x = Math.round(229 + i * STEP) + 0.5;
  ticks += `M${x} 90v-${tickLength(i)}`;
  if (i % 8 === 0) {
    const n = Math.abs(i / 8);
    add(rulerX, 'text', { x: x + 1.5, y: 84 }, n % 2 ? '1/2' : String(n / 2));
  }
}
add(rulerX, 'path', { d: ticks, stroke: '#222', fill: 'none' });

const rulerY = document.getElementById('rulerY');
ticks = 'M42.5 90V662';
for (let i = -48; i <= 39; i++) {
  const y = Math.round(405 + i * STEP) + 0.5;
  ticks += `M43 ${y}h-${tickLength(i)}`;
  if (i % 8 === 0 && y > 100) {
    const n = Math.abs(i / 8);
    if (n % 2) {
      add(rulerY, 'text', { x: 33, y: y - 10.5 }, '1');
      add(rulerY, 'text', { x: 33, y: y - 2 }, '2');
      ticks += `M33 ${y - 9}h5`;
    } else {
      add(rulerY, 'text', { x: 33, y: y - 4 }, String(n / 2));
    }
  }
}
add(rulerY, 'path', { d: ticks, stroke: '#222', fill: 'none' });

// lamps under the running applications
const lamps = document.getElementById('lamps');
[0, 1, 2, 7, 8, 10, 17, 24, 25].forEach(i => {
  const lamp = document.createElement('span');
  lamp.style.left = 26 + i * 29.5 + 'px';
  lamps.appendChild(lamp);
});
```
